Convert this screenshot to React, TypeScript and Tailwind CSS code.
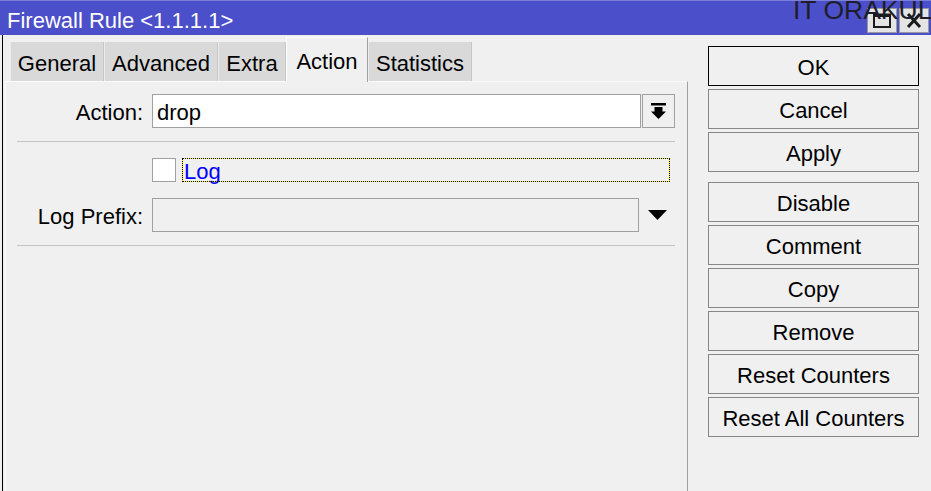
import React from "react";

type Tab = { label: string; width: string; active?: boolean };

const tabs: Tab[] = [
  { label: "General", width: "w-[94px]" },
  { label: "Advanced", width: "w-[114px]" },
  { label: "Extra", width: "w-[68px]" },
  { label: "Action", width: "w-[82px]", active: true },
  { label: "Statistics", width: "w-[104px]" },
];

function ArrowBarDown() {
  return (
    <svg width="15" height="16" viewBox="0 0 15 16" aria-hidden="true">
      <rect x="0" y="0" width="15" height="2.5" fill="#000" />
      <polygon points="3.5,4 11.5,4 11.5,8.5 15,8.5 7.5,16 0,8.5 3.5,8.5" fill="#000" />
    </svg>
  );
}

function TriangleDown() {
  return (
    <svg width="19" height="10" viewBox="0 0 19 10" aria-hidden="true">
      <polygon points="0,0 19,0 9.5,10" fill="#000" />
    </svg>
  );
}

function RestoreIcon() {
  return (
    <svg width="18" height="15" viewBox="0 0 18 15" aria-hidden="true">
      <rect x="1" y="1.5" width="16" height="12.5" fill="none" stroke="#1a1a1a" strokeWidth="2" />
      <rect x="1" y="1" width="16" height="3" fill="#1a1a1a" />
    </svg>
  );
}

function CloseIcon() {
  return (
    <svg width="16" height="15" viewBox="0 0 16 15" aria-hidden="true">
      <path d="M2 1 L14 14 M14 1 L2 14" stroke="#1a1a1a" strokeWidth="3" />
    </svg>
  );
}

function SideButton({ label, focused }: { label: string; focused?: boolean }) {
  return (
    <div
      className={
        focused
          ? "h-[40px] w-[211px] pt-[4px] flex items-center justify-center border border-black bg-[#f0f0f0] text-black"
          : "h-[40px] w-[211px] pt-[4px] flex items-center justify-center border border-[#868686] bg-[#f0f0f0] text-black"
      }
    >
      {label}
    </div>
  );
}

export default function App() {
  return (
    <div className="relative w-[931px] h-[491px] overflow-hidden bg-[#f0f0f0] font-['Liberation_Sans',Arial,sans-serif] text-[22px] leading-none">
      {/* title bar */}
      <div className="h-[35px] flex items-start bg-[#4b4fc9] border-t border-[#7c7fd9]">
        <div className="pl-[7px] pt-[9px] text-white whitespace-nowrap">Firewall Rule &lt;1.1.1.1&gt;</div>
        <div className="ml-auto mr-[2px] mt-[7px] flex gap-[2px]">
          <div className="w-[30px] h-[25px] flex items-center justify-center bg-[#e4e4e4] border border-[#9a9a9a]">
            <RestoreIcon />
          </div>
          <div className="w-[30px] h-[25px] flex items-center justify-center bg-[#e4e4e4] border border-[#9a9a9a]">
            <CloseIcon />
          </div>
        </div>
      </div>

      {/* watermark over the title bar */}
      <div className="absolute left-[793px] top-[-3px] text-[26.5px] leading-none text-[#1d1d2b] whitespace-nowrap">
        IT ORAKUL
      </div>

      <div className="flex h-[456px]">
        {/* left part: tabs and tab page */}
        <div className="ml-[2px] w-[686px] border-l border-black flex flex-col">
          <div className="h-[46px] pl-[7px] flex items-end">
            {tabs.map((t) =>
              t.active ? (
                <div
                  key={t.label}
                  className={`${t.width} h-[45px] -mb-px pt-[4px] relative z-10 flex items-center justify-center bg-[#f0f0f0] border-l border-t border-r border-l-white border-t-white border-r-[#a0a0a0] text-black`}
                >
                  {t.label}
                </div>
              ) : (
                <div
                  key={t.label}
                  className={`${t.width} h-[39px] pt-[4px] flex items-center justify-center bg-[#d9d9d9] border-l border-r border-l-[#ececec] border-r-[#c6c6c6] text-black`}
                >
                  {t.label}
                </div>
              )
            )}
          </div>

          <div className="ml-[2px] flex-1 border-l border-t border-r border-l-[#fbfbfb] border-t-[#fbfbfb] border-r-[#a0a0a0] flex flex-col">
            {/* Action */}
            <div className="mt-[12px] h-[34px] flex items-center">
              <div className="w-[137px] pt-[4px] text-right">Action:</div>
              <div className="ml-[9px] w-[489px] h-[34px] pt-[4px] flex items-center pl-[4px] bg-white border border-[#a0a0a0]">
                drop
              </div>
              <div className="ml-[1px] w-[33px] h-[34px] flex items-center justify-center bg-[#f0f0f0] border border-[#a0a0a0]">
                <ArrowBarDown />
              </div>
            </div>

            <div className="mt-[13px] ml-[11px] w-[658px] h-px bg-[#c4c4c4]" />

            {/* Log */}
            <div className="mt-[16px] h-[24px] flex items-center">
              <div className="w-[146px]" />
              <div className="w-[24px] h-[24px] bg-white border border-[#a0a0a0]" />
              <div className="ml-[6px] w-[488px] h-[24px] pt-[4px] flex items-center pl-[1px] border border-[#ffff00] outline-1 outline-dotted outline-black -outline-offset-1 text-[#0000ff]">
                Log
              </div>
            </div>

            {/* Log Prefix */}
            <div className="mt-[16px] h-[34px] flex items-center">
              <div className="w-[137px] pt-[4px] text-right">Log Prefix:</div>
              <div className="ml-[9px] w-[487px] h-[34px] bg-[#f0f0f0] border border-[#a0a0a0]" />
              <div className="ml-[9px] flex items-center">
                <TriangleDown />
              </div>
            </div>

            <div className="mt-[13px] ml-[11px] w-[658px] h-px bg-[#c4c4c4]" />
          </div>
        </div>

        {/* command buttons */}
        <div className="ml-[20px] pt-[11px] flex flex-col gap-[3px]">
          <SideButton label="OK" focused />
          <SideButton label="Cancel" />
          <SideButton label="Apply" />
          <div className="mt-[7px]">
            <SideButton label="Disable" />
          </div>
          <SideButton label="Comment" />
          <SideButton label="Copy" />
          <SideButton label="Remove" />
          <SideButton label="Reset Counters" />
          <SideButton label="Reset All Counters" />
        </div>
      </div>
    </div>
  );
}
